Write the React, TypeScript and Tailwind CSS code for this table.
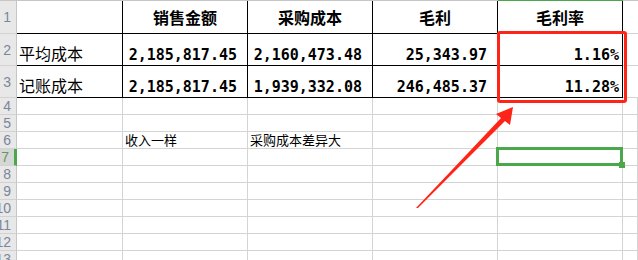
import React from 'react'

const COLS = 'grid-cols-[17px_106px_125px_125px_125px_125px_1fr]'
const mono = { fontFamily: '"DejaVu Sans Mono", "Liberation Mono", monospace' }
const cjk = { fontFamily: '"Liberation Sans", "Noto Sans CJK SC", sans-serif' }

type Row = {
  n: number
  h: string
  cells: (string | null)[]
  kind: 'head' | 'data' | 'note' | 'empty'
}

const rows: Row[] = [
  { n: 1, h: 'h-[33px]', kind: 'head', cells: ['', '销售金额', '采购成本', '毛利', '毛利率'] },
  { n: 2, h: 'h-[32px]', kind: 'data', cells: ['平均成本', '2,185,817.45', '2,160,473.48', '25,343.97', '1.16%'] },
  { n: 3, h: 'h-[32px]', kind: 'data', cells: ['记账成本', '2,185,817.45', '1,939,332.08', '246,485.37', '11.28%'] },
  { n: 4, h: 'h-[17px]', kind: 'empty', cells: [] },
  { n: 5, h: 'h-[17px]', kind: 'empty', cells: [] },
  { n: 6, h: 'h-[17px]', kind: 'note', cells: ['', '收入一样', '采购成本差异大', '', ''] },
  { n: 7, h: 'h-[17px]', kind: 'empty', cells: [] },
  { n: 8, h: 'h-[17px]', kind: 'empty', cells: [] },
  { n: 9, h: 'h-[17px]', kind: 'empty', cells: [] },
  { n: 10, h: 'h-[17px]', kind: 'empty', cells: [] },
  { n: 11, h: 'h-[17px]', kind: 'empty', cells: [] },
  { n: 12, h: 'h-[17px]', kind: 'empty', cells: [] },
  { n: 13, h: 'h-[17px]', kind: 'empty', cells: [] },
]

function RowHeader({ n, h }: { n: number; h: string }) {
  const active = n === 7
  return (
    <div
      className={`${h} flex items-center justify-end overflow-hidden border-b border-[#d2d2d2] pr-[5px] text-[14px] leading-none ${
        active
          ? 'bg-[#d6d6d6] text-[#5d9a5d] border-r-[3px] border-r-[#4aa84a]'
          : 'bg-[#e8e8e8] text-[#7a8699] border-r border-r-[#c6c6c6]'
      }`}
      style={cjk}
    >
      <span className="whitespace-nowrap">{n}</span>
    </div>
  )
}

function Cell({ row, col }: { row: Row; col: number }) {
  const inTable = row.n <= 3 && col < 5
  const text = row.cells[col] ?? ''
  const border = inTable
    ? 'border-r border-b border-black'
    : row.n <= 3 && col === 5
    ? 'border-b border-[#d4d4d4]'
    : 'border-r border-b border-[#d4d4d4]'

  if (row.kind === 'head') {
    return (
      <div
        className={`${row.h} ${border} flex items-center justify-center pt-[3px] text-[16px] font-bold text-black`}
        style={cjk}
      >
        {text}
      </div>
    )
  }
  if (row.kind === 'data') {
    if (col === 0) {
      return (
        <div
          className={`${row.h} ${border} flex items-end pb-[1px] pl-[2px] text-[16px] leading-[18px] text-black`}
          style={cjk}
        >
          {text}
        </div>
      )
    }
    return (
      <div
        className={`${row.h} ${border} flex items-end justify-end pb-[1px] text-[15px] font-bold leading-[17px] text-black ${
          col === 4 ? 'pr-[3px]' : 'pr-[10px]'
        }`}
        style={mono}
      >
        {text}
      </div>
    )
  }
  if (row.kind === 'note') {
    return (
      <div
        className={`${row.h} ${border} flex items-end overflow-visible whitespace-nowrap pl-[2px] text-[13px] leading-[15px] text-black`}
        style={cjk}
      >
        {text}
      </div>
    )
  }
  return <div className={`${row.h} ${border}`} />
}

export default function App() {
  return (
    <div className="relative h-[260px] w-[638px] overflow-hidden bg-white">
      {/* column header bottom edge */}
      <div className={`grid ${COLS} h-[1px]`}>
        <div className="bg-[#c6c6c6]" />
        <div className="bg-[#c6c6c6]" />
        <div className="bg-[#c6c6c6]" />
        <div className="bg-[#c6c6c6]" />
        <div className="bg-[#c6c6c6]" />
        <div className="bg-[#4aa84a]" />
        <div className="bg-[#c6c6c6]" />
      </div>

      {rows.map((row) => (
        <div key={row.n} className={`grid ${COLS}`}>
          <RowHeader n={row.n} h={row.h} />
          {[0, 1, 2, 3, 4, 5].map((c) => (
            <Cell key={c} row={row} col={c} />
          ))}
        </div>
      ))}

      {/* selected cell E7 */}
      <div className="absolute left-[496px] top-[147px] h-[19px] w-[127px] border-[3px] border-[#4aa84a]" />
      <div className="absolute left-[619px] top-[162px] h-[6px] w-[6px] bg-[#4aa84a]" />

      {/* red highlight box */}
      <div className="absolute left-[497px] top-[31px] h-[72px] w-[130px] rounded-[3px] border-[3px] border-[#ff2418]" />

      {/* arrow */}
      <svg className="absolute left-0 top-0" width="638" height="260" viewBox="0 0 638 260">
        <polygon
          points="416,208 501,118 496,114 513,107 510,125 505,121 418,208"
          fill="#ff2418"
        />
      </svg>
    </div>
  )
}
